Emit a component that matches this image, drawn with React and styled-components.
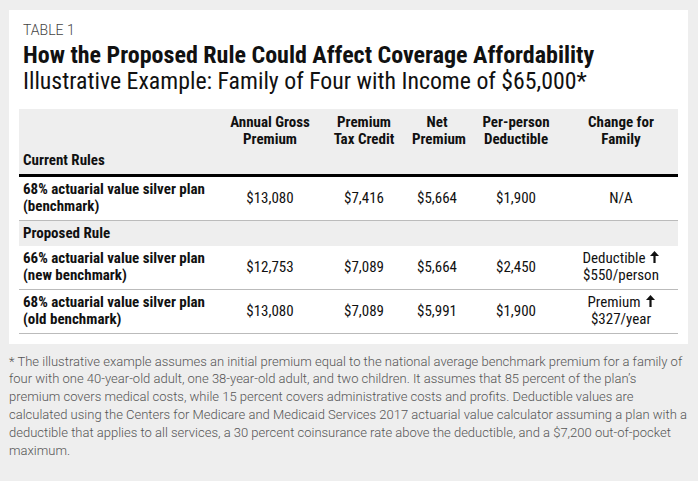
import styled, { createGlobalStyle } from "styled-components";

const GlobalStyle = createGlobalStyle`
  body {
    margin: 0;
    background: #eeeeee;
  }
`;

const cond = `"Roboto Condensed", "Liberation Sans Narrow", "DejaVu Sans Condensed", sans-serif`;

const Page = styled.div`
  width: 698px;
  height: 481px;
  background: #eeeeee;
  padding-top: 10px;
  box-sizing: border-box;
  overflow: hidden;
`;

const Card = styled.div`
  margin-left: 9px;
  width: 679px;
  background: #ffffff;
  box-sizing: border-box;
  padding: 12px 10px 10px 10px;
`;

const Kicker = styled.div`
  font-family: Roboto, sans-serif;
  font-weight: 300;
  font-size: 14px;
  line-height: 16px;
  color: #444;
  padding-left: 4px;
`;

const Title = styled.h1`
  margin: 4px 0 0 0;
  padding-left: 4px;
  font-family: ${cond};
  font-weight: 700;
  font-size: 24px;
  line-height: 26px;
  color: #111;
`;

const Subtitle = styled.h2`
  margin: 0;
  padding-left: 4px;
  font-family: ${cond};
  font-weight: 400;
  font-size: 23.8px;
  line-height: 26px;
  color: #111;
`;

const Table = styled.table`
  margin-top: 15px;
  width: 659px;
  border-collapse: collapse;
  table-layout: fixed;
  font-family: ${cond};
  font-size: 15px;
  line-height: 17px;
  color: #111;
`;

const HeadRow = styled.tr`
  background: #eeeeee;
  border-bottom: 3px solid #000;
`;

const HeadCell = styled.th`
  height: 66px;
  padding: 5px 0 5px 0;
  box-sizing: border-box;
  vertical-align: ${(p) => (p.$bottom ? "bottom" : "top")};
  text-align: ${(p) => (p.$bottom ? "left" : "center")};
  padding-left: ${(p) => (p.$bottom ? "4px" : "0")};
  padding-right: ${(p) => (p.$last ? "6px" : "0")};
  font-weight: 700;
`;

const Row = styled.tr`
  border-bottom: 1px solid #bbbbbb;
`;

const SectionRow = styled.tr`
  background: #eeeeee;
`;

const SectionCell = styled.td`
  height: 25px;
  padding: 0 0 0 4px;
  font-weight: 700;
  vertical-align: middle;
`;

const Label = styled.td`
  height: 43px;
  padding: 0 0 0 4px;
  font-weight: 700;
  vertical-align: middle;
`;

const Value = styled.td`
  text-align: center;
  vertical-align: middle;
  padding: 0;
`;

const Change = styled.td`
  text-align: center;
  vertical-align: middle;
  padding: 0 6px 0 0;
  line-height: 17px;
`;

const Arrow = styled.svg`
  width: 9px;
  height: 12px;
  margin-left: 5px;
  vertical-align: 0;
`;

const Footnote = styled.p`
  margin: 9px 0 0 0;
  padding: 0 10px 0 9px;
  font-family: Roboto, sans-serif;
  font-weight: 300;
  font-size: 13px;
  line-height: 17.9px;
  color: #555;
`;

const UpArrow = () => (
  <Arrow viewBox="0 0 9 12">
    <path d="M4.5 0 L9 5 H0 Z" fill="#111" />
    <rect x="3.4" y="4" width="2.2" height="8" fill="#111" />
  </Arrow>
);

const current = [
  ["68% actuarial value silver plan", "(benchmark)", "$13,080", "$7,416", "$5,664", "$1,900", null],
];

const proposed = [
  ["66% actuarial value silver plan", "(new benchmark)", "$12,753", "$7,089", "$5,664", "$2,450", ["Deductible", "$550/person"]],
  ["68% actuarial value silver plan", "(old benchmark)", "$13,080", "$7,089", "$5,991", "$1,900", ["Premium", "$327/year"]],
];

const DataRow = ({ r }) => (
  <Row>
    <Label>
      {r[0]}
      <br />
      {r[1]}
    </Label>
    <Value>{r[2]}</Value>
    <Value>{r[3]}</Value>
    <Value>{r[4]}</Value>
    <Value>{r[5]}</Value>
    <Change>
      {r[6] ? (
        <>
          {r[6][0]}
          <UpArrow />
          <br />
          {r[6][1]}
        </>
      ) : (
        "N/A"
      )}
    </Change>
  </Row>
);

const App = () => {
  return (
    <Page>
      <GlobalStyle />
      <Card>
        <Kicker>TABLE 1</Kicker>
        <Title>How the Proposed Rule Could Affect Coverage Affordability</Title>
        <Subtitle>Illustrative Example: Family of Four with Income of $65,000*</Subtitle>
        <Table>
          <colgroup>
            <col style={{ width: 205 }} />
            <col style={{ width: 92 }} />
            <col style={{ width: 96 }} />
            <col style={{ width: 50 }} />
            <col style={{ width: 108 }} />
            <col style={{ width: 108 }} />
          </colgroup>
          <thead>
            <HeadRow>
              <HeadCell $bottom>Current Rules</HeadCell>
              <HeadCell>
                Annual Gross
                <br />
                Premium
              </HeadCell>
              <HeadCell>
                Premium
                <br />
                Tax Credit
              </HeadCell>
              <HeadCell>
                Net
                <br />
                Premium
              </HeadCell>
              <HeadCell>
                Per-person
                <br />
                Deductible
              </HeadCell>
              <HeadCell $last>
                Change for
                <br />
                Family
              </HeadCell>
            </HeadRow>
          </thead>
          <tbody>
            {current.map((r, i) => (
              <DataRow key={i} r={r} />
            ))}
            <SectionRow>
              <SectionCell colSpan={6}>Proposed Rule</SectionCell>
            </SectionRow>
            {proposed.map((r, i) => (
              <DataRow key={i} r={r} />
            ))}
          </tbody>
        </Table>
      </Card>
      <Footnote>
        * The illustrative example assumes an initial premium equal to the national average benchmark
        premium for a family of four with one 40-year-old adult, one 38-year-old adult, and two
        children. It assumes that 85 percent of the plan’s premium covers medical costs, while 15
        percent covers administrative costs and profits. Deductible values are calculated using the
        Centers for Medicare and Medicaid Services 2017 actuarial value calculator assuming a plan
        with a deductible that applies to all services, a 30 percent coinsurance rate above the
        deductible, and a $7,200 out-of-pocket maximum.
      </Footnote>
    </Page>
  );
};

export default App;
